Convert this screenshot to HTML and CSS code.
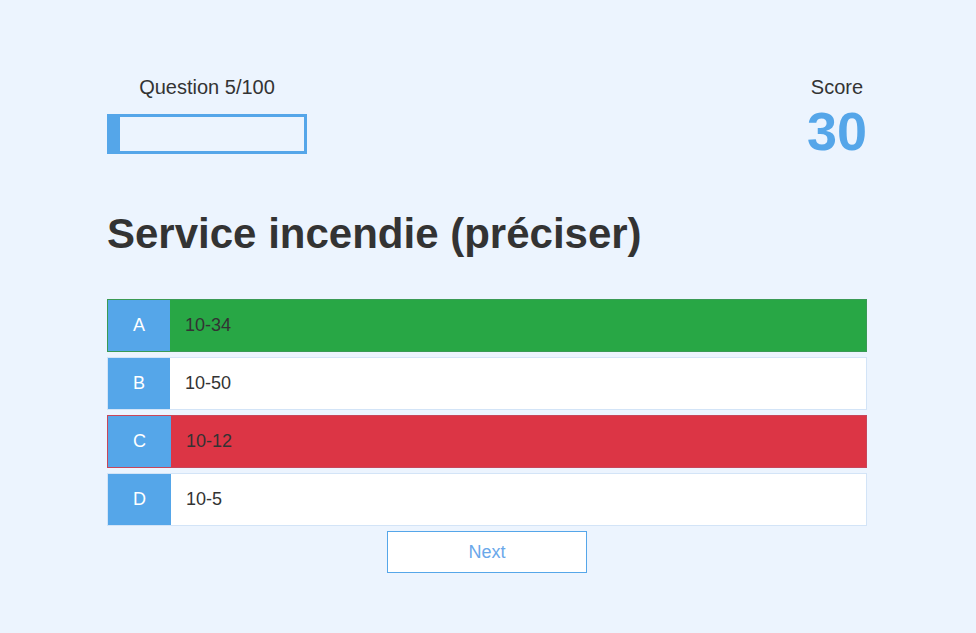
FILE: index.html
```html
<!DOCTYPE html>
<html lang="fr">
<head>
<meta charset="utf-8">
<title>Quiz</title>
<link rel="stylesheet" href="styles.css">
</head>
<body>
<main class="quiz">
  <header class="quiz-header">
    <div class="progress-block">
      <div class="progress-label">Question 5/100</div>
      <div class="progress-bar"><div class="progress-fill" style="width:5%"></div></div>
    </div>
    <div class="score-block">
      <div class="score-label">Score</div>
      <div class="score-value">30</div>
    </div>
  </header>
  <h1 class="question">Service incendie (préciser)</h1>
  <div class="choices">
    <div class="choice correct"><span class="choice-letter">A</span><span class="choice-text">10-34</span></div>
    <div class="choice"><span class="choice-letter">B</span><span class="choice-text">10-50</span></div>
    <div class="choice wrong"><span class="choice-letter">C</span><span class="choice-text">10-12</span></div>
    <div class="choice"><span class="choice-letter">D</span><span class="choice-text">10-5</span></div>
  </div>
  <div class="actions"><button class="next-btn" type="button">Next</button></div>
</main>
</body>
</html>
```
FILE: styles.css
```css
html, body {
  margin: 0;
  padding: 0;
}
body {
  background: #ecf4fe;
  font-family: "Liberation Sans", Arial, sans-serif;
  color: #333333;
}
.quiz {
  width: 760px;
  margin: 0 auto;
  padding-top: 72px;
  transform: translateX(-1px);
}
.quiz-header {
  display: flex;
  justify-content: space-between;
  align-items: flex-start;
}
.progress-block {
  width: 200px;
  text-align: center;
}
.progress-label,
.score-label {
  font-size: 20px;
  line-height: 30px;
}
.progress-bar {
  margin-top: 12px;
  height: 40px;
  box-sizing: border-box;
  border: 3px solid #55a6e9;
  background: #ecf4fe;
}
.progress-fill {
  height: 100%;
  background: #55a6e9;
}
.score-block {
  text-align: center;
}
.score-value {
  margin-top: 2px;
  font-size: 54px;
  font-weight: bold;
  line-height: 1;
  color: #55a6e9;
}
.question {
  margin: 51px 0 40px;
  font-size: 42px;
  line-height: 50px;
  font-weight: bold;
  color: #333333;
}
.choices {
  display: flex;
  flex-direction: column;
  gap: 5px;
}
.choice {
  display: flex;
  height: 53px;
  box-sizing: border-box;
  border: 1px solid #d3e4f7;
  background: #ffffff;
  font-size: 18px;
}
.choice.correct {
  background: #28a745;
  border-color: #3a9a55;
}
.choice.wrong {
  background: #dc3545;
  border-color: #c8465a;
}
.choice-letter {
  width: 62px;
  flex: none;
  background: #55a6e9;
  color: #ffffff;
  display: flex;
  align-items: center;
  justify-content: center;
}
.choice.wrong .choice-letter,
.choice:nth-child(4) .choice-letter {
  width: 63px;
}
.choice-text {
  display: flex;
  align-items: center;
  padding-left: 15px;
  color: #333333;
}
.actions {
  display: flex;
  justify-content: center;
  margin-top: 5px;
}
.next-btn {
  width: 200px;
  height: 42px;
  box-sizing: border-box;
  border: 1px solid #55a6e9;
  background: #ffffff;
  color: #6aa8ea;
  font-family: "Liberation Sans", Arial, sans-serif;
  font-size: 18px;
  padding: 0;
}
```
